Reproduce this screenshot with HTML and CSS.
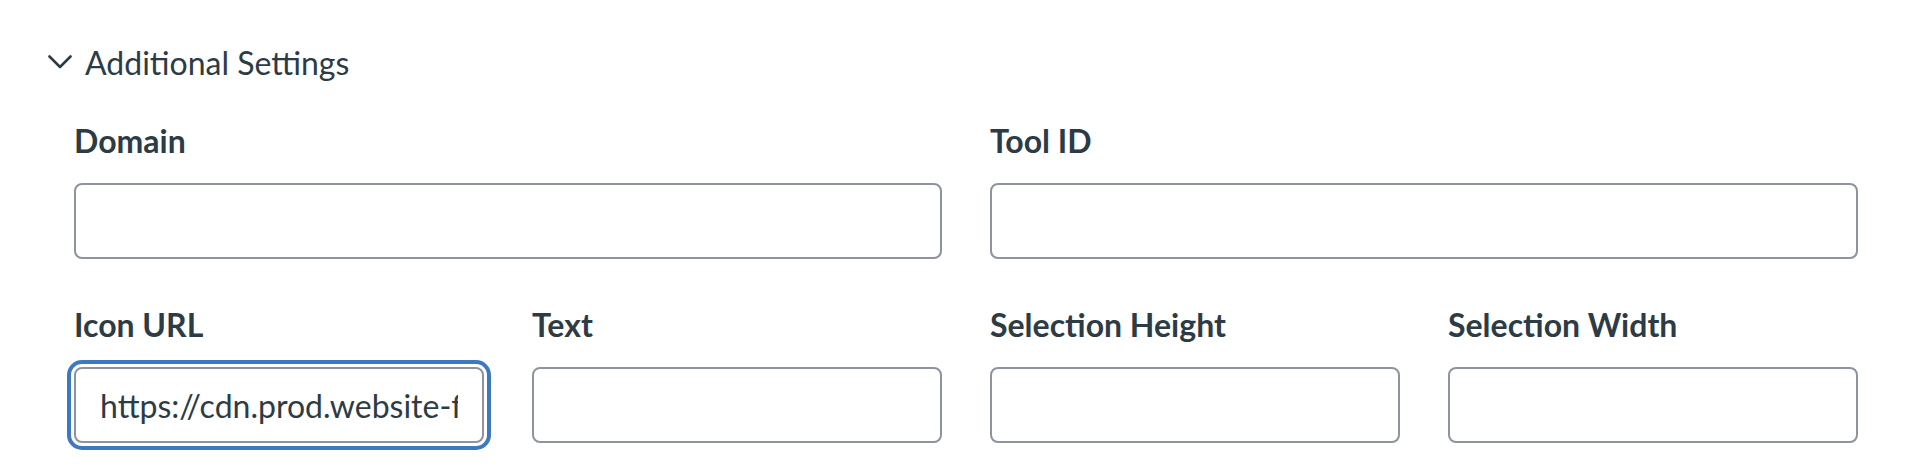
FILE: index.html
```html
<!DOCTYPE html>
<html lang="en">
<head>
    <meta charset="UTF-8">
    <meta name="viewport" content="width=device-width, initial-scale=1.0">
    <title>Additional Settings</title>

    <link rel="stylesheet" href="styles.css">
</head>
<body>
    <div class="settings">
        <button class="toggle" type="button">
            <svg class="chevron" width="24" height="14" viewBox="0 0 24 14">
                <polyline points="1.5,1.5 12,12 22.5,1.5" fill="none" stroke="#2D3B45" stroke-width="2.6" stroke-linecap="round" stroke-linejoin="round"/>
            </svg>
            <span>Additional Settings</span>
        </button>

        <div class="fields">
            <label class="field wide">
                <span class="label">Domain</span>
                <input type="text">
            </label>
            <label class="field wide">
                <span class="label">Tool ID</span>
                <input type="text">
            </label>
            <label class="field">
                <span class="label">Icon URL</span>
                <input type="text" class="focused" value="https://cdn.prod.website-files.com/icons/tool-icon.png">
            </label>
            <label class="field">
                <span class="label">Text</span>
                <input type="text">
            </label>
            <label class="field">
                <span class="label">Selection Height</span>
                <input type="text">
            </label>
            <label class="field">
                <span class="label">Selection Width</span>
                <input type="text">
            </label>
        </div>
    </div>
</body>
</html>
```

FILE: styles.css
```css
*{
    margin: 0;
    padding: 0;
    box-sizing: border-box;
}
body{
    background-color: #fff;
    color: #2D3B45;
    font-family: Lato, "Open Sans", sans-serif;
}
.settings{
    padding: 39px 72px 21px 48px;
}
.toggle{
    display: flex;
    align-items: center;
    gap: 13px;
    height: 48px;
    border: none;
    background: none;
    color: #2D3B45;
    font-family: inherit;
    font-size: 32px;
    font-weight: 400;
    line-height: 48px;
    cursor: pointer;
}
.toggle .chevron{
    display: block;
    margin-top: -2px;
}
.fields{
    display: grid;
    grid-template-columns: repeat(4, 1fr);
    gap: 42px 48px;
    margin: 30px 0 0 26px;
}
.field{
    display: flex;
    flex-direction: column;
}
.field.wide{
    grid-column: span 2;
}
.field .label{
    font-size: 32px;
    font-weight: 700;
    line-height: 48px;
    margin-bottom: 18px;
}
.field input{
    width: 100%;
    height: 76px;
    padding: 0 24px;
    border: 2px solid #8d949e;
    border-radius: 8px;
    background-color: #fff;
    color: #2D3B45;
    font-family: inherit;
    font-size: 32px;
    outline: none;
}
.field input.focused{
    box-shadow: 0 0 0 3px #fff, 0 0 0 7px #3d79c0;
}
```
